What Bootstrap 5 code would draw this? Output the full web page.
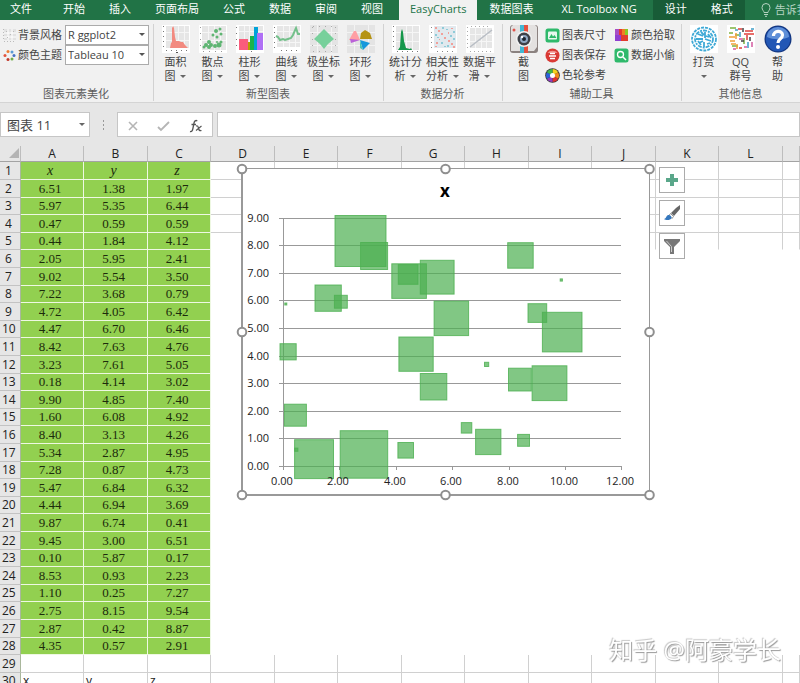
<!DOCTYPE html>
<html lang="zh-CN">
<head>
<meta charset="utf-8">
<meta name="viewport" content="width=device-width, initial-scale=1">
<title>EasyCharts</title>
<link href="https://cdn.jsdelivr.net/npm/bootstrap@5.3.0/dist/css/bootstrap.min.css" rel="stylesheet">
<style>
  body { font-family: "Open Sans", "Noto Sans CJK SC", sans-serif; font-size: 11px; line-height: 14px; color: #444; background: #fff; }
  .tabstrip { background: #217346; height: 20px; }
  .tabstrip .nav-link { --bs-nav-link-padding-x: 12px; --bs-nav-link-padding-y: 0px; color: #fff; line-height: 18px; height: 20px; border-radius: 0; font-size: 11px; white-space: nowrap; }
  .tabstrip .file-tab { --bs-nav-link-padding-x: 10px; margin-right: 9px; }
  .tabstrip .nav-link.active { background: #f1f1f1; color: #217346; --bs-nav-link-padding-x: 11px; margin-left: 4px; }
  .tabstrip .wide-tab { --bs-nav-link-padding-x: 16px; }
  .tabstrip .context-tabs { background: #185c37; }
  .tabstrip .tell { color: #b5d3c1; }
  .ribbon { background: #f1f1f1; border-bottom: 1px solid #d4d4d4; height: 83px; }
  .rgroup { border-right: 1px solid #d2d2d2; margin: 4px 0 1px; padding: 1px 4px 0 3px; }
  .rgroup:last-child { border-right: 0; }
  .rgroup-title { color: #5c5c5c; line-height: 14px; white-space: nowrap; }
  .tool { width: 37px; padding: 0; border: 0; border-radius: 0; font-size: 11px; line-height: 14px; color: #444; white-space: nowrap; }
  .tool svg { display: block; margin: 0 auto 2px; }
  .tool.snap { width: 35px; }
  .aid-tools { padding-right: 2px; }
  .mini { padding: 0; border: 0; font-size: 11px; line-height: 20px; color: #444; white-space: nowrap; gap: 2px; }
  .style-label { width: 62px; gap: 2px; white-space: nowrap; }
  .caret { display: inline-block; border: 3px solid transparent; border-top-color: #666; border-bottom: 0; vertical-align: 2px; margin-left: 2px; }
  .style-select { --bs-form-select-bg-img: url("data:image/svg+xml,%3Csvg xmlns='http://www.w3.org/2000/svg' viewBox='0 0 6 4'%3E%3Cpath d='M0 0h6L3 3z' fill='%23555'/%3E%3C/svg%3E"); width: 84px; height: 20px; font-size: 11px; line-height: 14px; color: #444; padding: 0 14px 0 2px; border: 1px solid #ababab; border-radius: 0; background-size: 6px 4px; background-position: right 3px center; }
  .formula-area { background: #e6e6e6; padding: 9px 0; }
  .fbox { background: #fff; border: 1px solid #c6c6c6; height: 25px; }
  .fbox .form-control { border: 0; border-radius: 0; padding: 0 6px; font-size: 13px; color: #444; height: 23px; background: transparent; }
  .name-box { width: 90px; }
  .edit-box { width: 96px; }
  .fbtn { padding: 0; border: 0; line-height: 1; }
  .sheet { overflow: hidden; }
  .cells { table-layout: fixed; width: 100%; border-collapse: separate; border-spacing: 0; color: #222; }
  .cells .c-head { width: 21px; }
  .cells .c-a { width: 63px; }
  .cells .c-b { width: 64px; }
  .cells th { font-weight: 400; font-size: 12px; background: #e6e6e6; padding: 0; text-align: center; line-height: 16px; }
  .cells thead th { height: 16px; border-right: 1px solid #bdbdbd; border-bottom: 1px solid #a3a3a3; line-height: 15px; }
  .cells tbody th { border-right: 1px solid #a9b79c; border-bottom: 1px solid #c3c3c3; text-align: left; padding-left: 2px; }
  .cells tbody th.one-digit { padding-left: 5px; }
  .cells tbody tr { height: 18px; }
  .cells tbody tr:nth-child(5n+3), .cells tbody tr:nth-child(5n) { height: 17px; }
  .cells td { padding: 0 0 0 2px; font-size: 12px; line-height: 16px; border-right: 1px solid transparent; border-bottom: 1px solid transparent; }
  .cells td.filled { background: #92d050; border-color: #eef8e2; font: 13px/16px "Liberation Serif", serif; text-align: center; padding: 0 4px 0 0; color: #1c2b0c; }
  .cells .filled i { font-size: 14px; }
  .cells td.line-b { border-bottom-color: #d0d0d0; }
  .cells td.line-r { border-right-color: #d0d0d0; }
  .corner { display: block; margin: 0 1px 1px auto; }
  .chart-object { position: absolute; left: 236px; top: 16px; }
  .chart-tools { position: absolute; left: 659px; top: 21px; gap: 7px; }
  .chart-tools .btn { width: 26px; height: 26px; padding: 0; border: 1px solid #ababab; border-radius: 0; background: #fff; }
  .chart-tools svg { display: block; margin: auto; }
  .watermark { position: fixed; right: 19px; bottom: 16px; font-size: 24px; line-height: 34px; color: #fff; text-shadow: 1px 1px 1px #999, -1px -1px 1px #c8c8c8; white-space: nowrap; }
</style>
<script src="https://cdn.jsdelivr.net/npm/bootstrap@5.3.0/dist/js/bootstrap.bundle.min.js"></script>
</head>
<body class="d-flex flex-column vh-100 overflow-hidden">

<nav class="tabstrip d-flex flex-shrink-0 overflow-hidden">
  <div class="nav flex-nowrap">
    <a class="nav-link file-tab" href="#">文件</a>
    <a class="nav-link" href="#">开始</a>
    <a class="nav-link" href="#">插入</a>
    <a class="nav-link" href="#">页面布局</a>
    <a class="nav-link" href="#">公式</a>
    <a class="nav-link" href="#">数据</a>
    <a class="nav-link" href="#">审阅</a>
    <a class="nav-link" href="#">视图</a>
    <a class="nav-link active" href="#" aria-current="page">EasyCharts</a>
    <a class="nav-link" href="#">数据图表</a>
    <a class="nav-link wide-tab" href="#">XL Toolbox NG</a>
  </div>
  <div class="nav flex-nowrap context-tabs">
    <a class="nav-link" href="#">设计</a>
    <a class="nav-link" href="#">格式</a>
  </div>
  <a class="nav-link tell d-flex align-items-center gap-1 px-3" href="#">
    <svg width="10" height="14" viewBox="0 0 10 14" fill="none" stroke="#b5d3c1"><path d="M3 9.500C3 8 1 7 1 4.500a4 4 0 0 1 8 0C9 7 7 8 7 9.500zM3 11.500h4M4 13.300h2"/></svg>
    告诉我
  </a>
</nav>

<section class="ribbon d-flex flex-shrink-0 overflow-hidden">
  <div class="rgroup d-flex flex-column justify-content-between flex-shrink-0">
    <div>
      <div class="d-flex align-items-center">
        <label class="style-label d-flex align-items-center" for="bgStyle">
          <svg width="13" height="13" viewBox="0 0 13 13"><path fill="#e2e2e2" d="M1 0h12v11H1z"/><path stroke="#fff" d="M5 0v11M9 0v11M1 4h12M1 8h12"/><path stroke="#bbb" stroke-dasharray="1 2" d="M.5 0v12M1 12.500h12"/><path fill="#bbb" d="M3 2h1v1H3zM7 5h1v1H7zM10 2h1v1h-1zM4 8h1v1H4z"/></svg>背景风格</label>
        <select class="form-select style-select" id="bgStyle"><option>R ggplot2</option></select>
      </div>
      <div class="d-flex align-items-center">
        <label class="style-label d-flex align-items-center" for="colorTheme">
          <svg width="13" height="13" viewBox="0 0 13 13"><circle cx="5" cy="2.500" r="1.500" fill="#ed7d31"/><circle cx="9" cy="3" r="1.500" fill="#5b9bd5"/><circle cx="11" cy="6.500" r="1.500" fill="#4472c4"/><circle cx="9" cy="10" r="1.500" fill="#70ad47"/><circle cx="5" cy="10.500" r="1.500" fill="#c0392b"/><circle cx="2" cy="6.500" r="1.500" fill="#e2543d"/></svg>颜色主题</label>
        <select class="form-select style-select" id="colorTheme"><option>Tableau 10</option></select>
      </div>
    </div>
    <div class="rgroup-title text-center">图表元素美化</div>
  </div>

  <div class="rgroup d-flex flex-column justify-content-between flex-shrink-0">
    <div class="d-flex align-items-start">
      <button class="btn tool" type="button">
        <svg width="28" height="28" viewBox="0 0 28 28"><path fill="#fff" d="M0 0h28v28H0z"/><path fill="#e6e6e6" d="M4 1h23v22H4z"/><path stroke="#f6f6f6" d="M10.500 1v22M16.500 1v22M22.500 1v22M4 7.500h23M4 15.500h23"/><path fill="#f28a80" d="M8 23l1-5 1-1V3l1-2 1 2 1 9 1 4 3 0 2 1 2 0 2 3 3 3z"/><path stroke="#777" stroke-dasharray="1 4" d="M1.500 1v24M4 25.500h22"/><path stroke="#555" d="M14 27.500h2"/></svg>
        面积<br>图 <span class="caret"></span></button>
      <button class="btn tool" type="button">
        <svg width="28" height="28" viewBox="0 0 28 28"><path fill="#fff" d="M0 0h28v28H0z"/><path fill="#e6e6e6" d="M3 1h24v24H3z"/><path stroke="#f6f6f6" d="M9.500 1v24M15.500 1v24M21.500 1v24M3 7.500h24M3 15.500h24"/><g fill="#5fb573"><circle cx="7" cy="20" r="2"/><circle cx="10" cy="17" r="2"/><circle cx="5" cy="22" r="1.500"/><circle cx="12" cy="20" r="2"/><circle cx="16" cy="21" r="2"/><circle cx="20" cy="20" r="2.500"/><circle cx="22" cy="17" r="1.500"/><circle cx="14" cy="10" r="1.500"/><circle cx="17" cy="6" r="2"/><circle cx="21" cy="4" r="1.500"/><circle cx="18" cy="12" r="1.500"/><circle cx="22" cy="9" r="1.500"/><circle cx="10" cy="22" r="2"/><circle cx="18" cy="17" r="1"/></g><path stroke="#999" stroke-dasharray="1 5" d="M1.500 2v24M4 26.500h22"/></svg>
        散点<br>图 <span class="caret"></span></button>
      <button class="btn tool" type="button">
        <svg width="28" height="28" viewBox="0 0 28 28"><path fill="#fff" d="M0 0h28v28H0z"/><path fill="#e6e6e6" d="M3 1h24v24H3z"/><path stroke="#f6f6f6" d="M8.500 1v24M13.500 1v24M3 6.500h24"/><path fill="#fa5c7c" d="M3 14h9v11H3z"/><path fill="#b79f00" d="M12 17h5v8h-5z"/><path fill="#19b34a" d="M14 11h4v14h-4z"/><path fill="#00a3d9" d="M18 2h4v23h-4z"/><path fill="#b070f5" d="M21 8h6v17h-6z"/><path stroke="#777" stroke-dasharray="1 5" d="M.5 2v24M15 26.500h2"/></svg>
        柱形<br>图 <span class="caret"></span></button>
      <button class="btn tool" type="button">
        <svg width="28" height="28" viewBox="0 0 28 28"><path fill="#fff" d="M0 0h28v28H0z"/><path fill="#e6e6e6" d="M4 1h23v21H4z"/><path stroke="#f6f6f6" d="M10.500 1v21M16.500 1v21M22.500 1v21M4 6.500h23M4 17.500h23"/><path fill="none" stroke="#74c08b" stroke-width="2" d="M3 11l2 1 2 3 3-1 2 1 3-1 3-1 2-3 3-7 2 6 2 0"/><path stroke="#777" stroke-dasharray="1 4" d="M1.500 2v24M8 25.500h18"/></svg>
        曲线<br>图 <span class="caret"></span></button>
      <button class="btn tool" type="button">
        <svg width="28" height="28" viewBox="0 0 28 28"><path fill="#e4e4e4" d="M0 0h28v28H0z"/><path stroke="#f3f3f3" d="M7.500 0v28M21.500 0v28M0 7.500h28M0 20.500h28"/><path fill="#77d09b" d="M14 4l4 4 6 6-6 5-4 5-4-5-6-5 6-6z"/><path stroke="#aaa" stroke-dasharray="1 5" d="M2.500 2v24M25.500 2v24M3 1.500h22M3 26.500h22"/></svg>
        极坐标<br>图 <span class="caret"></span></button>
      <button class="btn tool" type="button">
        <svg width="28" height="28" viewBox="0 0 28 28"><path fill="#e4e4e4" d="M0 0h28v28H0z"/><path stroke="#f3f3f3" d="M7.500 0v28M21.500 0v28M0 7.500h28M0 20.500h28"/><path fill="#ff9fa4" d="M13 15H2l5-9 2 0z"/><path fill="#b59314" d="M13 14l1-6 4-3 5 3 2 6z"/><path fill="#bb62d8" d="M13 15l-10-1 1 4z"/><path fill="#1598dc" d="M13 15l10 3-7 7z"/><path fill="#4ac3b5" d="M13 15l3 10-3-2z"/></svg>
        环形<br>图 <span class="caret"></span></button>
    </div>
    <div class="rgroup-title text-center">新型图表</div>
  </div>

  <div class="rgroup d-flex flex-column justify-content-between flex-shrink-0">
    <div class="d-flex align-items-start">
      <button class="btn tool" type="button">
        <svg width="28" height="28" viewBox="0 0 28 28"><path fill="#fff" d="M0 0h28v28H0z"/><path fill="#e6e6e6" d="M4 1h23v24H4z"/><path stroke="#f6f6f6" d="M14.500 1v24M20.500 1v24M4 7.500h23M4 16.500h23"/><path fill="#15974a" d="M6 25l2-3 1-15 1-3 1 3 1 9 2 7 4 1 1-1 1 2z"/><path stroke="#777" stroke-dasharray="1 4" d="M1.500 1v24M5 26.500h22"/></svg>
        统计分<br>析 <span class="caret"></span></button>
      <button class="btn tool" type="button">
        <svg width="28" height="28" viewBox="0 0 28 28"><path fill="#fff" d="M0 0h28v28H0z"/><path fill="#e1e9ee" d="M5 1h22v22H5z"/><g fill="#f1a09a"><path d="M6 2h2v2H6zM9 5h2v2H9zM12 8h2v2h-2zM15 12h2v2h-2zM19 15h2v2h-2zM22 18h2v2h-2zM24 21h2v2h-2zM7 17h2v2H7zM10 14h1v1h-1zM6 21h2v1H6zM22 3h2v1h-2zM19 7h1v2h-1z"/></g><g fill="#8fcbd8"><path d="M13 2h2v2h-2zM17 4h2v1h-2zM24 6h2v2h-2zM21 10h2v2h-2zM6 9h2v2H6zM8 12h2v1H8zM12 17h2v2h-2zM15 21h2v1h-2zM24 13h2v2h-2zM18 20h2v2h-2z"/></g><path stroke="#888" stroke-dasharray="1 4" d="M2.500 2v22M8 26.500h18"/></svg>
        相关性<br>分析 <span class="caret"></span></button>
      <button class="btn tool" type="button">
        <svg width="28" height="28" viewBox="0 0 28 28"><path fill="#fff" d="M0 0h28v28H0z"/><path fill="#e6e6e6" d="M4 3h22v20H4z"/><path stroke="#f6f6f6" d="M9.500 3v20M15.500 3v20M20.500 3v20M4 9.500h22M4 16.500h22"/><path stroke="#b8bdc4" stroke-width="1.500" d="M4 22L26 5"/><path stroke="#aaa" stroke-dasharray="1 3" d="M1.500 2v22M4 26.500h22M5 1.500h20"/></svg>
        数据平<br>滑 <span class="caret"></span></button>
    </div>
    <div class="rgroup-title text-center">数据分析</div>
  </div>

  <div class="rgroup d-flex flex-column justify-content-between flex-shrink-0">
    <div class="aid-tools d-flex align-items-start">
      <button class="btn tool snap" type="button">
        <svg width="28" height="28" viewBox="0 0 28 28"><rect width="28" height="28" rx="3" fill="#8b8280"/><path fill="#e3e1e0" d="M3 0h22l2 2v20l-3 4H1V2z"/><path fill="#42b7d3" d="M10 0h4v28h-4z"/><path fill="#e5513f" d="M14 0h4v28h-4z"/><circle cx="4" cy="5" r="1.500" fill="#e2534a"/><circle cx="14" cy="14" r="8" fill="#f1f1f1"/><circle cx="14" cy="14" r="6.500" fill="#3d4148"/><circle cx="14" cy="14" r="4" fill="#8fa7c2"/><circle cx="14" cy="14" r="2" fill="#1c2530"/><circle cx="12" cy="12" r="1.200" fill="#fff"/></svg>
        截<br>图</button>
      <div class="d-flex ps-1 gap-2">
        <div class="d-flex flex-column align-items-start">
          <button class="btn mini d-flex align-items-center" type="button"><svg width="15" height="15" viewBox="0 0 15 15"><rect x=".5" y=".5" width="14" height="14" rx="2.500" fill="#2fb96b"/><rect x="3" y="3.500" width="9" height="8" rx="1" fill="#e9f8ef"/><path fill="#2fb96b" d="M4 10l2.500-4L8 8.500 9.500 7l2 3z"/></svg>图表尺寸</button>
          <button class="btn mini d-flex align-items-center" type="button"><svg width="15" height="15" viewBox="0 0 15 15"><circle cx="7.500" cy="7.500" r="7" fill="#d93a35"/><path fill="#f0918c" d="M2.500 5a5.500 4 0 0 1 10 0z"/><path stroke="#fff" stroke-width="1.500" d="M5 5.500h5M4 8h7M5 10.500h5"/></svg>图表保存</button>
          <button class="btn mini d-flex align-items-center" type="button"><svg width="15" height="15" viewBox="0 0 15 15"><circle cx="7.500" cy="7.500" r="7.300" fill="#333"/><path fill="#f4d21f" d="M7.500 7.500L7.500 1a6.500 6.500 0 0 1 5.600 3.200z"/><path fill="#f08a1d" d="M7.500 7.500L13.100 4.200a6.500 6.500 0 0 1 0 6.500z"/><path fill="#e0312e" d="M7.500 7.500l5.600 3.200A6.500 6.500 0 0 1 7.500 14z"/><path fill="#8e3fc0" d="M7.500 7.500V14a6.500 6.500 0 0 1-5.600-3.300z"/><path fill="#2b62d9" d="M7.500 7.500l-5.600 3.200a6.500 6.500 0 0 1 0-6.500z"/><path fill="#3fb54a" d="M7.500 7.500L1.900 4.200A6.500 6.500 0 0 1 7.500 1z"/><circle cx="7.500" cy="7.500" r="2.500" fill="#fff"/></svg>色轮参考</button>
        </div>
        <div class="d-flex flex-column align-items-start">
          <button class="btn mini d-flex align-items-center" type="button"><svg width="15" height="15" viewBox="0 0 15 15"><path fill="#a84fc4" d="M1 1h4v6H1z"/><path fill="#e8372c" d="M5 1h3v6H5z"/><path fill="#f07d24" d="M8 1h3v6H8z"/><path fill="#8ac926" d="M11 1h3v6h-3z"/><path fill="#8f3fd0" d="M1 7h6v6H1z"/><path fill="#e23b2e" d="M7 7h7v6H7z"/></svg>颜色拾取</button>
          <button class="btn mini d-flex align-items-center" type="button"><svg width="15" height="15" viewBox="0 0 15 15"><rect x=".5" y=".5" width="14" height="14" rx="2.500" fill="#2fb96b"/><circle cx="6.500" cy="6.500" r="3" fill="none" stroke="#fff" stroke-width="1.300"/><path stroke="#fff" stroke-width="1.500" d="M9 9l3 3"/></svg>数据小偷</button>
        </div>
      </div>
    </div>
    <div class="rgroup-title text-center">辅助工具</div>
  </div>

  <div class="rgroup d-flex flex-column justify-content-between flex-shrink-0">
    <div class="d-flex align-items-start">
      <button class="btn tool" type="button">
        <svg width="28" height="28" viewBox="0 0 28 28"><path fill="#fff" d="M0 0h28v28H0z"/><g fill="none" stroke="#3fa9d6" stroke-width="1.800"><ellipse cx="14" cy="14" rx="12" ry="11.500" stroke-dasharray="3 1"/><ellipse cx="14" cy="14" rx="9" ry="8.500" stroke-dasharray="4 1 2 1"/><path d="M8 9l5 2M11 7l3 3M15 7v6M18 9l3 4M6 14h7M15 14l6 2M9 18l4-2M8 16l3 4M14 17v5M17 19l3-1M16 11l3 1"/></g></svg>
        打赏<br><span class="caret ms-0"></span></button>
      <button class="btn tool" type="button">
        <svg width="28" height="28" viewBox="0 0 28 28"><path fill="#fff" d="M0 0h28v28H0z"/><g stroke-width="1.500" fill="none"><path stroke="#7cb342" d="M3 3h6M2 8h4M17 13v6M5 21h6M8 10h4"/><path stroke="#e0403b" d="M11 4h4M18 6h8M20 10v5M25 9h2M12 23h3M17 9h9"/><path stroke="#f0a03a" d="M2 12h6M9 8v6M3 16h5M10 19v5M4 19h5"/><path stroke="#3f9fc8" d="M8 5h3M13 7v5M21 17v6M24 4h3"/><path stroke="#444" d="M16 3v4M23 12v4M14 16h3"/><path stroke="#d45ba0" d="M12 14h4M25 17v5M6 24h3M17 22h3"/></g></svg>
        QQ<br>群号</button>
      <button class="btn tool" type="button">
        <svg width="28" height="28" viewBox="0 0 28 28"><circle cx="14" cy="14" r="13.500" fill="#12357f"/><circle cx="14" cy="14" r="12.300" fill="#2257b5"/><path fill="#5f8fd8" d="M3 12a11 10 0 0 1 22 0c-6 3-16 3-22 0z"/><path fill="none" stroke="#fff" stroke-width="3.200" d="M9.500 11c0-6 9-6 9-1 0 4-4.500 3.500-4.500 8"/><circle cx="14" cy="22" r="2" fill="#fff"/></svg>
        帮<br>助</button>
    </div>
    <div class="rgroup-title text-center">其他信息</div>
  </div>
</section>

<section class="formula-area d-flex flex-shrink-0 align-items-center">
  <div class="fbox name-box d-flex align-items-center pe-1">
    <input class="form-control" type="text" value="图表 11" aria-label="名称框">
    <button class="btn fbtn" type="button" aria-label="展开名称框"><span class="caret d-block ms-0"></span></button>
  </div>
  <svg class="mx-2" width="11" height="12" viewBox="0 0 11 12"><path fill="#999" d="M5 1h1v2H5zM5 5h1v2H5zM5 9h1v2H5z"/></svg>
  <div class="fbox edit-box d-flex align-items-center justify-content-around">
    <button class="btn fbtn" type="button" aria-label="取消"><svg width="12" height="12" viewBox="0 0 12 12"><path d="M2 2l8 8M10 2l-8 8" stroke="#b5b5b5" stroke-width="1.600"/></svg></button>
    <button class="btn fbtn" type="button" aria-label="输入"><svg width="13" height="12" viewBox="0 0 13 12"><path d="M1 7l3 3 8-8" fill="none" stroke="#b5b5b5" stroke-width="1.800"/></svg></button>
    <button class="btn fbtn" type="button" aria-label="插入函数"><svg width="14" height="14" viewBox="0 0 14 14" fill="none" stroke="#555"><path stroke-width="1.300" d="M1 12.500c2 .5 2.500-1 3-3.500L5 4c.4-2 1.500-3 3.300-2.200M2.500 5.500h4.500"/><path stroke-width="1.100" d="M7 7c2-.5 2 .5 2.500 2.500S10.500 12 12.500 11.500M12.500 7L7 11.500"/></svg></button>
  </div>
  <div class="fbox flex-grow-1 ms-1"><input class="form-control" type="text" aria-label="编辑栏"></div>
</section>

<main class="sheet position-relative flex-grow-1">
  <table class="cells">
    <colgroup>
      <col class="c-head"><col class="c-a"><col class="c-b"><col class="c-a"><col class="c-b"><col class="c-a"><col class="c-b"><col class="c-a"><col class="c-b"><col class="c-a"><col class="c-b"><col class="c-a"><col class="c-b"><col>
    </colgroup>
    <thead>
      <tr><th aria-label="全选"><svg class="corner" width="10" height="10" viewBox="0 0 10 10"><path fill="#b4b4b4" d="M10 0v10H0z"/></svg></th><th>A</th><th>B</th><th>C</th><th>D</th><th>E</th><th>F</th><th>G</th><th>H</th><th>I</th><th>J</th><th>K</th><th>L</th><th></th></tr>
    </thead>
    <tbody id="rows"></tbody>
  </table>

  <svg class="chart-object" width="420" height="340" viewBox="236 162 420 340" font-family="Open Sans, sans-serif" font-size="11" fill="#222">
    <rect x="242" y="169" width="407" height="326" fill="#fff"/>
    <path fill="none" stroke="#999" d="M242 168.500h408M649.500 169v326"/>
    <path fill="none" stroke="#999" stroke-width="2" d="M242 169v326h408"/>
    <text x="445" y="197" font-size="17" font-weight="700" text-anchor="middle" fill="#000">x</text>
    <g id="plot"></g>
    <g fill="#fff" stroke="#8f8f8f" stroke-width="2">
      <circle cx="242" cy="169" r="4.300"/><circle cx="445.500" cy="169" r="4.300"/><circle cx="649.500" cy="169" r="4.300"/>
      <circle cx="242" cy="332" r="4.300"/><circle cx="649.500" cy="332" r="4.300"/>
      <circle cx="242" cy="495" r="4.300"/><circle cx="445.500" cy="495" r="4.300"/><circle cx="649.500" cy="495" r="4.300"/>
    </g>
  </svg>

  <div class="chart-tools d-flex flex-column">
    <button class="btn" type="button" aria-label="图表元素"><svg width="14" height="14" viewBox="0 0 14 14"><path fill="#5aa78a" d="M5 1h4v4h4v4H9v4H5V9H1V5h4z"/></svg></button>
    <button class="btn" type="button" aria-label="图表样式"><svg width="18" height="18" viewBox="0 0 18 18"><path fill="#666" d="M17 1v4l-6 7-3-3 5-5z"/><path fill="#fff" stroke="#777" stroke-width=".8" d="M7.500 9.500l3 3-1.500 2-3-3z"/><path fill="#3477bd" d="M1 15c2 0 2-3 4-4 2-.5 4 1.500 3.500 3C7.500 16.500 3 16.500 1 15z"/></svg></button>
    <button class="btn" type="button" aria-label="图表筛选器"><svg width="18" height="18" viewBox="0 0 18 18"><path fill="#777" d="M1 2h16v2l-6 6v7H7v-7L1 4z"/><path stroke="#ccc" fill="none" d="M3.500 4l5 5.500V15"/></svg></button>
  </div>
</main>

<div class="watermark">知乎 @阿豪学长</div>

<script>
  const data = [
    [6.51,1.38,1.97],[5.97,5.35,6.44],[0.47,0.59,0.59],[0.44,1.84,4.12],[2.05,5.95,2.41],[9.02,5.54,3.50],
    [7.22,3.68,0.79],[4.72,4.05,6.42],[4.47,6.70,6.46],[8.42,7.63,4.76],[3.23,7.61,5.05],[0.18,4.14,3.02],
    [9.90,4.85,7.40],[1.60,6.08,4.92],[8.40,3.13,4.26],[5.34,2.87,4.95],[7.28,0.87,4.73],[5.47,6.84,6.32],
    [4.44,6.94,3.69],[9.87,6.74,0.41],[9.45,3.00,6.51],[0.10,5.87,0.17],[8.53,0.93,2.23],[1.10,0.25,7.27],
    [2.75,8.15,9.54],[2.87,0.42,8.87],[4.35,0.57,2.91]
  ];

  // Worksheet rows: header, data, one blank row, then the next block's header
  const LAST_COL = 13;
  let html = '';
  for (let r = 1; r <= 30; r++) {
    html += `<tr><th scope="row"${r < 10 ? ' class="one-digit"' : ''}>${r}</th>`;
    for (let c = 1; c <= LAST_COL; c++) {
      let text = '', cls = [];
      if (c <= 3 && r <= 28) {
        cls.push('filled');
        text = r === 1 ? `<i>${'xyz'[c - 1]}</i>` : data[r - 2][c - 1].toFixed(2);
      } else {
        if (r === 30 && c <= 3) text = 'xyz'[c - 1];
        if (r <= 4 || r >= 29) cls.push('line-b');
        if (r <= 4 || r >= 29 || (r === 5 && c >= 10)) cls.push('line-r');
      }
      html += `<td class="${cls.join(' ')}">${text}</td>`;
    }
    html += '</tr>';
  }
  document.getElementById('rows').innerHTML = html;

  // Bubble chart: square markers whose side is proportional to z
  const X0 = 283, Y0 = 466, SX = 28.2, SY = 27.6, SIDE = 5.35;
  let g = '';
  for (let v = 0; v <= 9; v++) {
    const y = Math.round(Y0 - v * SY) + 0.5;
    g += `<path stroke="#999" d="M279 ${y}H621"/><text x="269" y="${y + 3.5}" text-anchor="end">${v.toFixed(2)}</text>`;
  }
  g += '<path stroke="#999" d="M283.5 218V466"/>';
  for (let v = 0; v <= 12; v += 2) {
    const x = Math.round(X0 + v * SX);
    g += `<path stroke="#999" d="M${x + 0.5} 466v4"/>`;
  }
  for (const [x, y, z] of data) {
    const s = Math.max(z * SIDE, 2);
    g += `<rect x="${(X0 + x * SX - s / 2).toFixed(1)}" y="${(Y0 - y * SY - s / 2).toFixed(1)}" width="${s.toFixed(1)}" height="${s.toFixed(1)}" fill="#4caf50" fill-opacity=".7" stroke="#4caf50" stroke-opacity=".8"/>`;
  }
  for (let v = 0; v <= 12; v += 2) {
    g += `<text x="${Math.round(X0 + v * SX) - 1}" y="485" text-anchor="middle">${v.toFixed(2)}</text>`;
  }
  document.getElementById('plot').innerHTML = g;
</script>
</body>
</html>
